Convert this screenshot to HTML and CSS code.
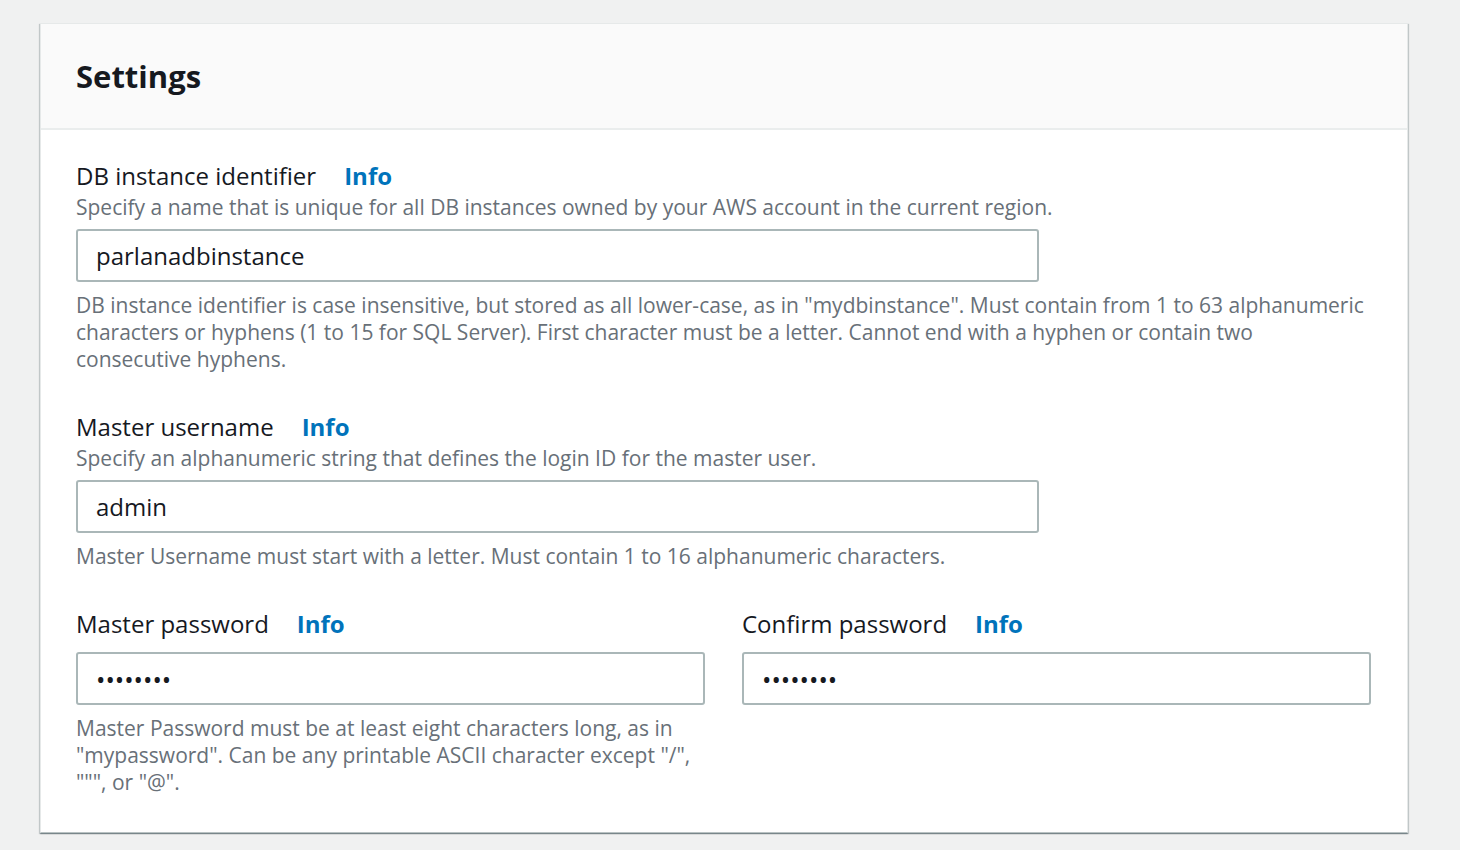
FILE: index.html
```html
<!DOCTYPE html>
<html>
<head>
<meta charset="utf-8">
<link rel="stylesheet" href="styles.css">
</head>
<body>
<div class="page">
  <section class="panel">
    <header class="panel-header">
      <h2 class="panel-title">Settings</h2>
    </header>
    <div class="panel-body">
      <div class="field">
        <div class="label-row"><span class="label">DB instance identifier</span><a class="info">Info</a></div>
        <div class="desc">Specify a name that is unique for all DB instances owned by your AWS account in the current region.</div>
        <div class="input wide">parlanadbinstance</div>
        <div class="constraint">DB instance identifier is case insensitive, but stored as all lower-case, as in "mydbinstance". Must contain from 1 to 63 alphanumeric characters or hyphens (1 to 15 for SQL Server). First character must be a letter. Cannot end with a hyphen or contain two consecutive hyphens.</div>
      </div>
      <div class="field">
        <div class="label-row"><span class="label">Master username</span><a class="info">Info</a></div>
        <div class="desc">Specify an alphanumeric string that defines the login ID for the master user.</div>
        <div class="input wide">admin</div>
        <div class="constraint">Master Username must start with a letter. Must contain 1 to 16 alphanumeric characters.</div>
      </div>
      <div class="columns">
        <div class="field">
          <div class="label-row"><span class="label">Master password</span><a class="info">Info</a></div>
          <div class="input pw">&bull;&bull;&bull;&bull;&bull;&bull;&bull;&bull;</div>
          <div class="constraint">Master Password must be at least eight characters long, as in "mypassword". Can be any printable ASCII character except "/", """, or "@".</div>
        </div>
        <div class="field">
          <div class="label-row"><span class="label">Confirm password</span><a class="info">Info</a></div>
          <div class="input pw">&bull;&bull;&bull;&bull;&bull;&bull;&bull;&bull;</div>
        </div>
      </div>
    </div>
  </section>
</div>
</body>
</html>
```

FILE: styles.css
```css
* { box-sizing: border-box; }
html, body { margin: 0; padding: 0; }
body {
  background: #f0f1f1;
  font-family: "Open Sans", "Noto Sans", sans-serif;
  color: #16191f;
  width: 1460px;
  height: 850px;
  overflow: hidden;
}
.page { padding: 23px 52px 0 40px; }
.panel {
  background: #fff;
  border: 1px solid #e6e9e9;
  border-bottom: 1px solid #b9c2c3;
  box-shadow: 0 1px 1px rgba(0,28,36,0.3), 1px 1px 1px rgba(0,28,36,0.15), -1px 1px 1px rgba(0,28,36,0.15);
  width: 1368px;
}
.panel-header {
  background: #fafafa;
  border-bottom: 2px solid #eaeded;
  height: 106px;
  padding: 0 35px;
  display: flex;
  align-items: center;
}
.panel-title {
  margin: 0;
  font-size: 31px;
  font-weight: 700;
}
.panel-body { padding: 30px 35px 36px 35px; }
.field { margin-bottom: 38px; }
.columns {
  display: grid;
  grid-template-columns: 629px 629px;
  column-gap: 37px;
  margin-bottom: -38px;
}
.label-row { display: flex; align-items: baseline; gap: 28px; }
.label { font-size: 24px; line-height: 32px; }
.info { color: #0073bb; font-weight: 700; font-size: 24px; line-height: 32px; }
.desc { font-size: 21px; line-height: 30px; color: #687078; }
.input {
  border: 2px solid #aab7b8;
  border-radius: 3px;
  height: 53px;
  padding: 0 18px;
  font-size: 24px;
  display: flex;
  align-items: center;
  margin-top: 7px;
}
.input.wide { width: 963px; }
.input.pw { font-size: 25px; margin-top: 12px; }
.constraint { font-size: 21px; line-height: 27px; color: #687078; margin-top: 10px; }
```
